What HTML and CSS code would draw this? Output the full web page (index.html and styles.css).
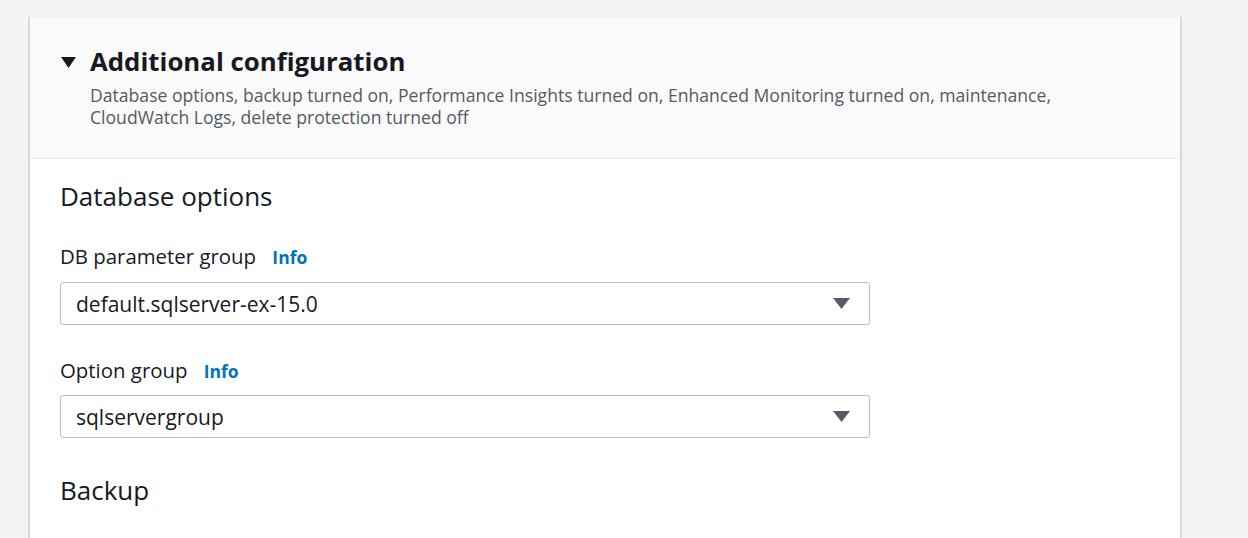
FILE: index.html
```html
<!DOCTYPE html>
<html lang="en">
<head>
<meta charset="utf-8">
<title>Additional configuration</title>
<link rel="stylesheet" href="styles.css">
</head>
<body>
<div class="page">
  <section class="card">
    <header class="card-header">
      <div class="title-row">
        <svg class="expand-icon" width="15" height="11" viewBox="0 0 15 11" aria-hidden="true"><polygon points="0,0 15,0 7.5,11" fill="#16191f"/></svg>
        <h2 class="title">Additional configuration</h2>
      </div>
      <p class="description">Database options, backup turned on, Performance Insights turned on, Enhanced Monitoring turned on, maintenance,<br>CloudWatch Logs, delete protection turned off</p>
    </header>
    <div class="card-body">
      <h3 class="section-title">Database options</h3>
      <div class="field">
        <label class="field-label">DB parameter group <a class="info" href="#">Info</a></label>
        <div class="select">
          <span class="select-value">default.sqlserver-ex-15.0</span>
          <svg class="caret" width="17" height="11" viewBox="0 0 17 11" aria-hidden="true"><polygon points="0,0 17,0 8.5,11" fill="#545b64"/></svg>
        </div>
      </div>
      <div class="field">
        <label class="field-label">Option group <a class="info" href="#">Info</a></label>
        <div class="select">
          <span class="select-value">sqlservergroup</span>
          <svg class="caret" width="17" height="11" viewBox="0 0 17 11" aria-hidden="true"><polygon points="0,0 17,0 8.5,11" fill="#545b64"/></svg>
        </div>
      </div>
      <h3 class="section-title backup">Backup</h3>
    </div>
  </section>
</div>
</body>
</html>
```

FILE: styles.css
```css
html, body {
  margin: 0;
  padding: 0;
  background: #f2f3f3;
  font-family: "Open Sans", "Noto Sans", sans-serif;
  color: #16191f;
  overflow: hidden;
}

.page {
  padding: 17px 0 0 28px;
  height: 538px;
  box-sizing: border-box;
  overflow: hidden;
}

.card {
  width: 1154px;
  box-sizing: border-box;
  border-left: 2px solid #d5dbdb;
  border-right: 2px solid #d5dbdb;
  background: #ffffff;
  min-height: 600px;
}

.card-header {
  background: #fafafa;
  border-bottom: 1px solid #eaeded;
  padding: 28px 0 30px 31px;
}

.title-row {
  display: flex;
  align-items: center;
  gap: 14px;
}

.expand-icon {
  flex: none;
  margin-top: 2px;
}

.title {
  margin: 0;
  font-size: 25.8px;
  line-height: 32px;
  font-weight: 700;
}

.description {
  margin: 7px 0 0 29px;
  font-size: 17.6px;
  line-height: 22px;
  color: #545b64;
}

.card-body {
  padding: 21px 0 0 30px;
}

.section-title {
  margin: 0;
  font-size: 26px;
  line-height: 32px;
  font-weight: 400;
}

.field {
  margin-top: 31px;
}

.field + .field {
  margin-top: 32px;
}

.field-label {
  display: block;
  font-size: 20.4px;
  line-height: 26px;
}

.info {
  margin-left: 11px;
  font-size: 17.5px;
  font-weight: 700;
  color: #0073bb;
  text-decoration: none;
}

.select {
  margin-top: 12px;
  width: 810px;
  height: 43px;
  box-sizing: border-box;
  border: 1px solid #b9c1c2;
  border-radius: 3px;
  background: #ffffff;
  display: flex;
  align-items: center;
  justify-content: space-between;
  padding: 0 19px 0 15px;
}

.select-value {
  font-size: 21px;
}

.field + .field .select {
  margin-top: 11px;
}

.backup {
  margin-top: 36px;
}
```
